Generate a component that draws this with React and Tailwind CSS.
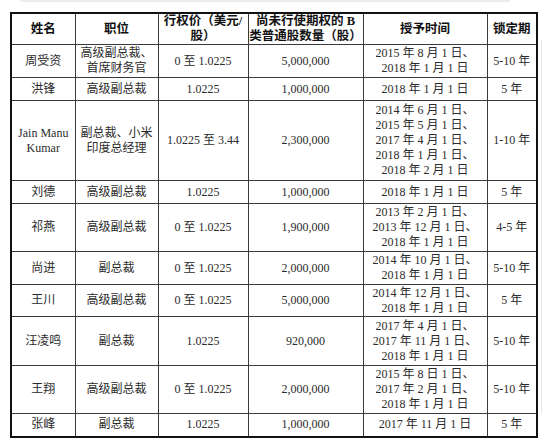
import React from "react";

const rows = [
  { h: 33, name: ["周受资"], pos: ["高级副总裁、", "首席财务官"], price: "0 至 1.0225", qty: "5,000,000", dates: ["2015 年 8 月 1 日、", "2018 年 1 月 1 日"], lock: "5-10 年" },
  { h: 23, name: ["洪锋"], pos: ["高级副总裁"], price: "1.0225", qty: "1,000,000", dates: ["2018 年 1 月 1 日"], lock: "5 年" },
  { h: 80, name: ["Jain Manu", "Kumar"], pos: ["副总裁、小米", "印度总经理"], price: "1.0225 至 3.44", qty: "2,300,000", dates: ["2014 年 6 月 1 日、", "2015 年 5 月 1 日、", "2017 年 4 月 1 日、", "2018 年 1 月 1 日、", "2018 年 2 月 1 日"], lock: "1-10 年" },
  { h: 23, name: ["刘德"], pos: ["高级副总裁"], price: "1.0225", qty: "1,000,000", dates: ["2018 年 1 月 1 日"], lock: "5 年" },
  { h: 48, name: ["祁燕"], pos: ["高级副总裁"], price: "0 至 1.0225", qty: "1,900,000", dates: ["2013 年 2 月 1 日、", "2013 年 12 月 1 日、", "2018 年 1 月 1 日"], lock: "4-5 年" },
  { h: 33, name: ["尚进"], pos: ["副总裁"], price: "0 至 1.0225", qty: "2,000,000", dates: ["2014 年 10 月 1 日、", "2018 年 1 月 1 日"], lock: "5-10 年" },
  { h: 32, name: ["王川"], pos: ["高级副总裁"], price: "0 至 1.0225", qty: "5,000,000", dates: ["2014 年 12 月 1 日、", "2018 年 1 月 1 日"], lock: "5 年" },
  { h: 49, name: ["汪凌鸣"], pos: ["副总裁"], price: "1.0225", qty: "920,000", dates: ["2017 年 4 月 1 日、", "2017 年 11 月 1 日、", "2018 年 1 月 1 日"], lock: "5-10 年" },
  { h: 48, name: ["王翔"], pos: ["高级副总裁"], price: "0 至 1.0225", qty: "2,000,000", dates: ["2015 年 8 日 1 日、", "2017 年 2 月 1 日、", "2018 年 1 月 1 日"], lock: "5-10 年" },
  { h: 23, name: ["张峰"], pos: ["副总裁"], price: "1.0225", qty: "1,000,000", dates: ["2017 年 11 月 1 日"], lock: "5 年" },
];

function Lines({ items }) {
  return items.map((t, i) => (
    <div key={i} className="whitespace-nowrap">{t}</div>
  ));
}

const td = "border border-[#3a3a3a] p-0 text-center align-middle";

export default function App() {
  return (
    <div
      className="w-[550px] h-[444px] bg-white relative overflow-hidden"
      style={{ fontFamily: '"Liberation Serif", "Noto Sans CJK SC", serif' }}
    >
      <div className="absolute left-[20px] right-[40px] top-0 h-[2px] bg-[#ececec]" />
      <div className="absolute right-[8px] top-[40px] bottom-[30px] w-px bg-[#e6e6e6]" />
      <div className="pt-[12px] pl-[10px]">
        <table className="table-fixed border-collapse border-2 border-[#111] w-[526px] text-[12px] leading-[15px] text-[#2b2b2b]">
          <colgroup>
            <col className="w-[64px]" />
            <col className="w-[83px]" />
            <col className="w-[90px]" />
            <col className="w-[115px]" />
            <col className="w-[124px]" />
            <col className="w-[50px]" />
          </colgroup>
          <thead>
            <tr className="font-bold text-[#111] text-[12.5px]">
              <th className={`${td} h-[31px]`}>姓名</th>
              <th className={td}>职位</th>
              <th className={td}>
                <div>行权价（美元/</div>
                <div>股）</div>
              </th>
              <th className={td}>
                <div>尚未行使期权的 B</div>
                <div>类普通股数量（股）</div>
              </th>
              <th className={td}>授予时间</th>
              <th className={td}>锁定期</th>
            </tr>
          </thead>
          <tbody>
            {rows.map((r, i) => (
              <tr key={i}>
                <td className={td} style={{ height: r.h }}>
                  <Lines items={r.name} />
                </td>
                <td className={td}>
                  <Lines items={r.pos} />
                </td>
                <td className={td}>{r.price}</td>
                <td className={td}>{r.qty}</td>
                <td className={td}>
                  <Lines items={r.dates} />
                </td>
                <td className={td}>{r.lock}</td>
              </tr>
            ))}
          </tbody>
        </table>
      </div>
    </div>
  );
}
